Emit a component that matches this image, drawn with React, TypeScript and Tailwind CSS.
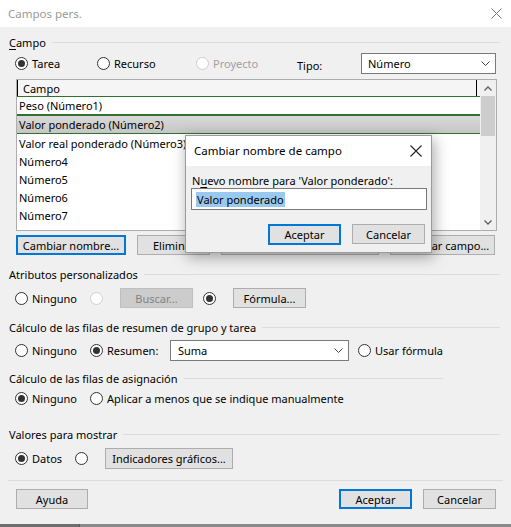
import React from "react";

function Radio({ checked = false, disabled = false }: { checked?: boolean; disabled?: boolean }) {
  return (
    <span
      className={
        "inline-flex items-center justify-center w-[13px] h-[13px] rounded-full border bg-white shrink-0 " +
        (disabled ? "border-[#cfcfcf]" : "border-[#333333]")
      }
    >
      {checked && <span className="w-[7px] h-[7px] rounded-full bg-[#333333]" />}
    </span>
  );
}

function Btn({
  children,
  w,
  focused = false,
  disabled = false,
  className = "",
}: {
  children?: React.ReactNode;
  w: string;
  focused?: boolean;
  disabled?: boolean;
  className?: string;
}) {
  return (
    <div
      className={
        "h-[20px] flex items-center justify-center shrink-0 whitespace-nowrap overflow-hidden " +
        w +
        " " +
        (focused
          ? "border-2 border-[#0078d7] bg-[#e1e1e1]"
          : disabled
          ? "border border-[#bfbfbf] bg-[#cccccc] text-[#838383]"
          : "border border-[#adadad] bg-[#e1e1e1]") +
        " " +
        className
      }
    >
      {children}
    </div>
  );
}

function Chevron() {
  return (
    <svg width="9" height="5" viewBox="0 0 9 5" className="shrink-0">
      <path d="M0.5 0.5 L4.5 4.5 L8.5 0.5" fill="none" stroke="#444" strokeWidth="1" />
    </svg>
  );
}

function Header({ children, lineEnd = "pr-[11px]" }: { children: React.ReactNode; lineEnd?: string }) {
  return (
    <div className={"flex items-center h-[16px] pl-[9px] " + lineEnd}>
      <span className="whitespace-nowrap">{children}</span>
      <div className="flex-1 ml-[6px] h-px bg-[#dcdcdc]" />
    </div>
  );
}

export default function App() {
  const rows = ["Valor real ponderado (Número3)", "Número4", "Número5", "Número6", "Número7", "Número8"];
  return (
    <div className="w-[511px] h-[527px] bg-[#f0f0f0] relative overflow-hidden flex flex-col text-[11px] leading-none text-black font-['Noto_Sans',sans-serif]">
      {/* Title bar */}
      <div className="h-[27px] bg-white flex items-center justify-between pl-[8px] pr-[9px] shrink-0">
        <span className="text-[#9a9a9a] text-[11.5px]">Campos pers.</span>
        <svg width="11" height="11" viewBox="0 0 11 11">
          <path d="M0.5 0.5 L10.5 10.5 M10.5 0.5 L0.5 10.5" stroke="#777" strokeWidth="1" />
        </svg>
      </div>

      {/* Campo */}
      <div className="mt-[7px]">
        <Header>
          <span className="underline underline-offset-2">C</span>ampo
        </Header>
      </div>

      <div className="mt-[3px] h-[21px] flex items-center pl-[15px]">
        <Radio checked />
        <span className="ml-[4px] w-[65px]">Tarea</span>
        <Radio />
        <span className="ml-[4px] w-[82px]">Recurso</span>
        <Radio disabled />
        <span className="ml-[4px] w-[84px] text-[#a0a0a0]">Proyecto</span>
        <span className="w-[64px] pt-[3px]">Tipo:</span>
        <div className="w-[135px] h-[21px] border border-[#7a7a7a] bg-white flex items-center justify-between pl-[6px] pr-[5px]">
          <span>Número</span>
          <Chevron />
        </div>
      </div>

      {/* List */}
      <div className="mt-[5px] ml-[16px] w-[481px] h-[152px] border border-[#adadad] bg-white flex overflow-hidden">
        <div className="flex-1 flex flex-col">
          <div className="h-[16px] bg-[#f5f5f5] flex shrink-0">
            <div className="w-[460px] border-l border-r border-black flex items-center pl-[5px]">Campo</div>
          </div>
          <div className="h-[19px] border-y border-[#327032] flex items-center pl-[2px] shrink-0">Peso (Número1)</div>
          <div className="h-[19px] border-y border-[#327032] flex items-center pl-[2px] shrink-0 bg-gradient-to-b from-[#d9d9d9] to-[#c6c6c6]">
            Valor ponderado (Número2)
          </div>
          {rows.map((r) => (
            <div key={r} className="h-[18px] flex items-center pl-[2px] shrink-0">
              {r}
            </div>
          ))}
        </div>
        <div className="w-[16px] bg-[#f0f0f0] flex flex-col items-center">
          <div className="h-[16px] flex items-center justify-center">
            <svg width="8" height="5" viewBox="0 0 8 5">
              <path d="M0.5 4.5 L4 1 L7.5 4.5" fill="none" stroke="#606060" strokeWidth="1.3" />
            </svg>
          </div>
          <div className="w-[14px] h-[40px] bg-[#cdcdcd]" />
          <div className="flex-1" />
          <div className="h-[16px] flex items-center justify-center">
            <svg width="8" height="5" viewBox="0 0 8 5">
              <path d="M0.5 0.5 L4 4 L7.5 0.5" fill="none" stroke="#606060" strokeWidth="1.3" />
            </svg>
          </div>
        </div>
      </div>

      {/* buttons row under list */}
      <div className="mt-[4px] h-[20px] flex pl-[16px]">
        <Btn w="w-[110px]" focused>
          Cambiar nombre...
        </Btn>
        <Btn w="w-[73px]" className="ml-[11px] justify-start pl-[15px]">
          Eliminar
        </Btn>
        <Btn w="w-[158px]" className="ml-[11px]" />
        <Btn w="w-[105px]" className="ml-[11px]">
          Importar campo...
        </Btn>
      </div>

      {/* Atributos personalizados */}
      <div className="mt-[11px]">
        <Header>Atributos personalizados</Header>
      </div>
      <div className="mt-[6px] h-[20px] flex items-center pl-[15px]">
        <Radio />
        <span className="ml-[4px] w-[58px]">Ninguno</span>
        <Radio disabled />
        <Btn w="w-[73px]" disabled className="ml-[17px]">
          Buscar...
        </Btn>
        <span className="ml-[10px]" />
        <Radio checked />
        <Btn w="w-[73px]" className="ml-[17px]">
          Fórmula...
        </Btn>
      </div>

      {/* Cálculo resumen */}
      <div className="mt-[11px]">
        <Header>Cálculo de las filas de resumen de grupo y tarea</Header>
      </div>
      <div className="mt-[5px] h-[20px] flex items-center pl-[15px]">
        <Radio />
        <span className="ml-[4px] w-[58px]">Ninguno</span>
        <Radio checked />
        <span className="ml-[4px] w-[63px]">Resumen:</span>
        <div className="w-[179px] h-[21px] border border-[#7a7a7a] bg-white flex items-center justify-between pl-[7px] pr-[5px]">
          <span>Suma</span>
          <Chevron />
        </div>
        <span className="ml-[9px]" />
        <Radio />
        <span className="ml-[4px]">Usar fórmula</span>
      </div>

      {/* Cálculo asignación */}
      <div className="mt-[10px]">
        <Header lineEnd="pr-[68px]">Cálculo de las filas de asignación</Header>
      </div>
      <div className="mt-[2px] h-[20px] flex items-center pl-[15px]">
        <Radio checked />
        <span className="ml-[4px] w-[58px]">Ninguno</span>
        <Radio />
        <span className="ml-[4px]">Aplicar a menos que se indique manualmente</span>
      </div>

      {/* Valores para mostrar */}
      <div className="mt-[18px]">
        <Header>Valores para mostrar</Header>
      </div>
      <div className="mt-[6px] h-[21px] flex items-center pl-[15px]">
        <Radio checked />
        <span className="ml-[4px] w-[43px]">Datos</span>
        <Radio />
        <Btn w="w-[128px]" className="ml-[17px] h-[21px]">
          Indicadores gráficos...
        </Btn>
      </div>

      <div className="mt-[11px] mx-[8px] h-px bg-[#dcdcdc] shrink-0" />

      <div className="mt-[8px] h-[20px] flex pl-[16px] pr-[15px]">
        <Btn w="w-[72px]">Ayuda</Btn>
        <div className="flex-1" />
        <Btn w="w-[73px]" focused>
          Aceptar
        </Btn>
        <Btn w="w-[73px]" className="ml-[11px]">
          Cancelar
        </Btn>
      </div>

      <div className="mt-auto h-[3px] flex shrink-0">
        <div className="w-[79px] bg-[#6e6e6e]" />
        <div className="w-[1px] bg-[#2f7a2f]" />
        <div className="flex-1 bg-[#8a8a8a]" />
      </div>

      {/* Dialog */}
      <div className="absolute left-[185px] top-[135px] w-[247px] h-[118px] border border-[#9a9a9a] bg-[#f0f0f0] shadow-[2px_4px_14px_rgba(0,0,0,0.35)] flex flex-col">
        <div className="h-[30px] bg-white flex items-center justify-between pl-[8px] pr-[9px] shrink-0">
          <span className="text-[11.5px]">Cambiar nombre de campo</span>
          <svg width="12" height="12" viewBox="0 0 12 12">
            <path d="M0.5 0.5 L11.5 11.5 M11.5 0.5 L0.5 11.5" stroke="#222" strokeWidth="1.1" />
          </svg>
        </div>
        <div className="mt-[7px] pl-[6px] h-[14px] flex items-center">
          <span>
            N<span className="underline underline-offset-2">u</span>evo nombre para 'Valor ponderado':
          </span>
        </div>
        <div className="mt-[1px] ml-[5px] w-[236px] h-[22px] border border-[#7a7a7a] bg-white flex items-center pl-[4px]">
          <span className="bg-[#99c9ef] px-[1px] h-[15px] flex items-center">Valor ponderado</span>
        </div>
        <div className="mt-[14px] flex pl-[82px]">
          <Btn w="w-[73px]" focused className="h-[21px]">
            Aceptar
          </Btn>
          <Btn w="w-[73px]" className="ml-[11px]">
            Cancelar
          </Btn>
        </div>
      </div>
    </div>
  );
}
